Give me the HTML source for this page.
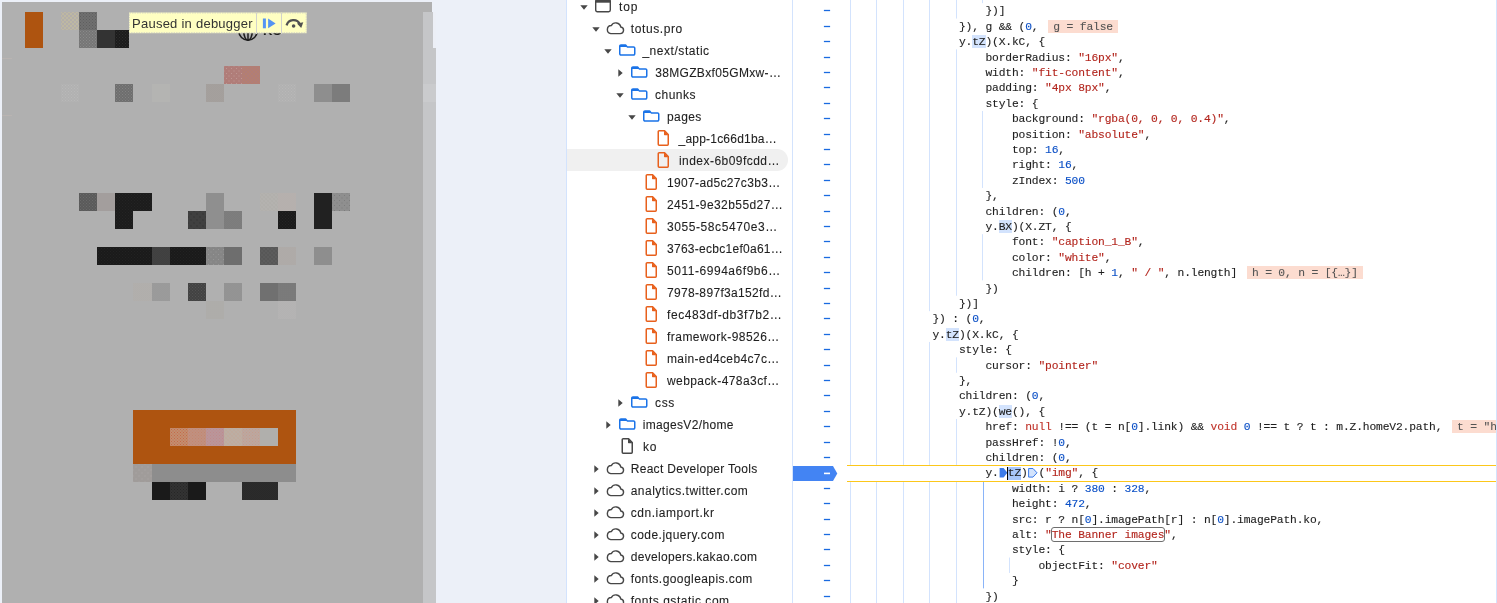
<!DOCTYPE html><html><head><meta charset="utf-8"><title>Paused in debugger</title><style>

*{box-sizing:border-box;margin:0;padding:0}
html,body{width:1497px;height:603px;overflow:hidden;background:#ecf0f8}
body{position:relative;font-family:"Liberation Sans",sans-serif;color:#1f1f1f}
.a{position:absolute}
#page{left:2px;top:2px;width:430px;height:601px;background:#b0b0b0}
.b{position:absolute}
#tip{left:129px;top:12.5px;height:20.8px;width:177.7px;font-size:13px;line-height:21px;color:#333;white-space:nowrap}
#nav{will-change:transform;left:566px;top:0;width:227px;height:603px;background:#fff;border-left:1px solid #d3e3fd;border-right:1px solid #d3e3fd;overflow:hidden}
.row{position:absolute;left:0;width:226px;height:22px}
.t{-webkit-text-stroke:0.1px;position:absolute;top:1px;height:22px;line-height:22px;font-size:12px;white-space:nowrap;color:#1f1f1f}
.sel{position:absolute;left:0;top:0;width:221px;height:22px;background:#f0f0f0;border-radius:0 11px 11px 0}
#ed{will-change:transform;left:793px;top:0;width:704px;height:603px;background:#fff;overflow:hidden}
.g{position:absolute;width:1px;background:#d3e3fd}
.ln{-webkit-text-stroke:0.12px;position:absolute;left:0;height:15.4px;line-height:15.4px;white-space:pre;font-family:"Liberation Mono",monospace;font-size:11.3px;letter-spacing:-0.16px;color:#1f1f1f}
.s{color:#b3261e}.n{color:#0a4fc6}.k{color:#c0342b}
.hl{background:#d3e3fd;padding-top:1px}
.w{position:absolute;height:12.5px;line-height:14.5px;background:#fcdcd0;color:#555;-webkit-text-stroke:0.1px;white-space:pre;font-family:"Liberation Mono",monospace;font-size:11.3px;letter-spacing:-0.16px;padding:0 5px;overflow:hidden}
.d{position:absolute;left:31px;width:6px;height:1.4px;background:#1a73e8}

</style></head><body>
<div id="page" class="a"></div>
<div class="a" style="left:423px;top:12px;width:13px;height:591px;background:#c5c6c8"></div>
<div class="a" style="left:433px;top:12px;width:3px;height:36px;background:#eceff6"></div>
<div class="a" style="left:423px;top:84px;width:13px;height:18px;background:#cacbcd"></div>
<div class="a" style="left:2px;top:58px;width:10px;height:1px;background:#b9b4b2"></div>
<div class="a" style="left:2px;top:115px;width:10px;height:1px;background:#b9b4b2"></div>
<div class="b" style="left:25px;top:12px;width:18px;height:36px;background:#ae5410"></div>
<div class="b" style="left:61px;top:12px;width:18px;height:18px;background:radial-gradient(circle at 50% 50%,#dcd38c 0.45px,transparent 0.8px) 0 0/4px 4px,radial-gradient(circle at 50% 50%,#dcd38c 0.45px,transparent 0.8px) 2px 2px/4px 4px,#b3aeaa"></div>
<div class="b" style="left:79px;top:12px;width:18px;height:18px;background:radial-gradient(circle at 50% 50%,#5e5e5e 0.45px,transparent 0.8px) 0 0/3px 3px,radial-gradient(circle at 50% 50%,#5e5e5e 0.45px,transparent 0.8px) 1.5px 1.5px/3px 3px,#707070"></div>
<div class="b" style="left:79px;top:30px;width:18px;height:18px;background:radial-gradient(circle at 50% 50%,#8a8a8a 0.45px,transparent 0.8px) 0 0/3px 3px,radial-gradient(circle at 50% 50%,#8a8a8a 0.45px,transparent 0.8px) 1.5px 1.5px/3px 3px,#767676"></div>
<div class="b" style="left:97px;top:30px;width:18px;height:18px;background:#333333"></div>
<div class="b" style="left:115px;top:30px;width:14px;height:18px;background:radial-gradient(circle at 50% 50%,#2e2e2e 0.45px,transparent 0.8px) 0 0/3px 3px,radial-gradient(circle at 50% 50%,#2e2e2e 0.45px,transparent 0.8px) 1.5px 1.5px/3px 3px,#1c1c1c"></div>
<div class="b" style="left:224px;top:66px;width:18px;height:18px;background:radial-gradient(circle at 50% 50%,#bf9793 0.45px,transparent 0.8px) 0 0/5px 5px,radial-gradient(circle at 50% 50%,#bf9793 0.45px,transparent 0.8px) 2.5px 2.5px/5px 5px,#b07d79"></div>
<div class="b" style="left:242px;top:66px;width:18px;height:18px;background:radial-gradient(circle at 50% 50%,#c08458 0.45px,transparent 0.8px) 0 0/4px 4px,radial-gradient(circle at 50% 50%,#c08458 0.45px,transparent 0.8px) 2px 2px/4px 4px,#b07d79"></div>
<div class="b" style="left:61px;top:84px;width:18px;height:18px;background:radial-gradient(circle at 50% 50%,#b9b9b9 0.45px,transparent 0.8px) 0 0/3px 3px,radial-gradient(circle at 50% 50%,#b9b9b9 0.45px,transparent 0.8px) 1.5px 1.5px/3px 3px,#b1b1b1"></div>
<div class="b" style="left:115px;top:84px;width:18px;height:18px;background:radial-gradient(circle at 50% 50%,#828282 0.45px,transparent 0.8px) 0 0/3px 3px,radial-gradient(circle at 50% 50%,#828282 0.45px,transparent 0.8px) 1.5px 1.5px/3px 3px,#6e6e6e"></div>
<div class="b" style="left:152px;top:84px;width:18px;height:18px;background:#b4b4b2"></div>
<div class="b" style="left:206px;top:84px;width:18px;height:18px;background:radial-gradient(circle at 50% 50%,#9d9895 0.45px,transparent 0.8px) 0 0/2px 2px,radial-gradient(circle at 50% 50%,#9d9895 0.45px,transparent 0.8px) 1px 1px/2px 2px,#aca7a4"></div>
<div class="b" style="left:278px;top:84px;width:18px;height:18px;background:radial-gradient(circle at 50% 50%,#b9b8b8 0.45px,transparent 0.8px) 0 0/3px 3px,radial-gradient(circle at 50% 50%,#b9b8b8 0.45px,transparent 0.8px) 1.5px 1.5px/3px 3px,#b1b1b1"></div>
<div class="b" style="left:314px;top:84px;width:18px;height:18px;background:#8e8e8e"></div>
<div class="b" style="left:332px;top:84px;width:18px;height:18px;background:#7c7c7c"></div>
<div class="b" style="left:79px;top:193px;width:18px;height:18px;background:radial-gradient(circle at 50% 50%,#6a6a6a 0.45px,transparent 0.8px) 0 0/3px 3px,radial-gradient(circle at 50% 50%,#6a6a6a 0.45px,transparent 0.8px) 1.5px 1.5px/3px 3px,#5a5a5a"></div>
<div class="b" style="left:97px;top:193px;width:18px;height:18px;background:#a39e9d"></div>
<div class="b" style="left:115px;top:193px;width:37px;height:18px;background:radial-gradient(circle at 50% 50%,#242424 0.45px,transparent 0.8px) 0 0/3px 3px,radial-gradient(circle at 50% 50%,#242424 0.45px,transparent 0.8px) 1.5px 1.5px/3px 3px,#1c1c1c"></div>
<div class="b" style="left:206px;top:193px;width:18px;height:36px;background:#8f8f8f"></div>
<div class="b" style="left:260px;top:193px;width:18px;height:18px;background:radial-gradient(circle at 50% 50%,#aaa8a5 0.45px,transparent 0.8px) 0 0/4px 4px,radial-gradient(circle at 50% 50%,#aaa8a5 0.45px,transparent 0.8px) 2px 2px/4px 4px,#b4b2af"></div>
<div class="b" style="left:278px;top:193px;width:18px;height:18px;background:radial-gradient(circle at 50% 50%,#bab5b2 0.45px,transparent 0.8px) 0 0/2px 2px,radial-gradient(circle at 50% 50%,#bab5b2 0.45px,transparent 0.8px) 1px 1px/2px 2px,#b2adaa"></div>
<div class="b" style="left:314px;top:193px;width:18px;height:36px;background:radial-gradient(circle at 50% 50%,#262626 0.45px,transparent 0.8px) 0 0/2px 2px,radial-gradient(circle at 50% 50%,#262626 0.45px,transparent 0.8px) 1px 1px/2px 2px,#1c1c1c"></div>
<div class="b" style="left:332px;top:193px;width:18px;height:18px;background:radial-gradient(circle at 50% 50%,#7c7c7c 0.45px,transparent 0.8px) 0 0/5px 5px,radial-gradient(circle at 50% 50%,#7c7c7c 0.45px,transparent 0.8px) 2.5px 2.5px/5px 5px,#8f8f8f"></div>
<div class="b" style="left:115px;top:211px;width:18px;height:18px;background:radial-gradient(circle at 50% 50%,#242424 0.45px,transparent 0.8px) 0 0/3px 3px,radial-gradient(circle at 50% 50%,#242424 0.45px,transparent 0.8px) 1.5px 1.5px/3px 3px,#1c1c1c"></div>
<div class="b" style="left:188px;top:211px;width:18px;height:18px;background:radial-gradient(circle at 50% 50%,#2c2c2c 0.45px,transparent 0.8px) 0 0/6px 6px,radial-gradient(circle at 50% 50%,#2c2c2c 0.45px,transparent 0.8px) 3px 3px/6px 6px,#404040"></div>
<div class="b" style="left:224px;top:211px;width:18px;height:18px;background:radial-gradient(circle at 50% 50%,#868686 0.45px,transparent 0.8px) 0 0/2px 2px,radial-gradient(circle at 50% 50%,#868686 0.45px,transparent 0.8px) 1px 1px/2px 2px,#767676"></div>
<div class="b" style="left:278px;top:211px;width:18px;height:18px;background:radial-gradient(circle at 50% 50%,#242424 0.45px,transparent 0.8px) 0 0/3px 3px,radial-gradient(circle at 50% 50%,#242424 0.45px,transparent 0.8px) 1.5px 1.5px/3px 3px,#1a1a1a"></div>
<div class="b" style="left:97px;top:247px;width:55px;height:18px;background:radial-gradient(circle at 50% 50%,#222222 0.45px,transparent 0.8px) 0 0/3px 3px,radial-gradient(circle at 50% 50%,#222222 0.45px,transparent 0.8px) 1.5px 1.5px/3px 3px,#1a1a1a"></div>
<div class="b" style="left:152px;top:247px;width:18px;height:18px;background:radial-gradient(circle at 50% 50%,#4a4a4a 0.45px,transparent 0.8px) 0 0/2px 2px,radial-gradient(circle at 50% 50%,#4a4a4a 0.45px,transparent 0.8px) 1px 1px/2px 2px,#3a3a3a"></div>
<div class="b" style="left:170px;top:247px;width:36px;height:18px;background:radial-gradient(circle at 50% 50%,#222222 0.45px,transparent 0.8px) 0 0/3px 3px,radial-gradient(circle at 50% 50%,#222222 0.45px,transparent 0.8px) 1.5px 1.5px/3px 3px,#1a1a1a"></div>
<div class="b" style="left:206px;top:247px;width:18px;height:18px;background:radial-gradient(circle at 50% 50%,#979797 0.45px,transparent 0.8px) 0 0/5px 5px,radial-gradient(circle at 50% 50%,#979797 0.45px,transparent 0.8px) 2.5px 2.5px/5px 5px,#868686"></div>
<div class="b" style="left:224px;top:247px;width:18px;height:18px;background:#6e6e6e"></div>
<div class="b" style="left:260px;top:247px;width:18px;height:18px;background:radial-gradient(circle at 50% 50%,#4c4c4c 0.45px,transparent 0.8px) 0 0/4px 4px,radial-gradient(circle at 50% 50%,#4c4c4c 0.45px,transparent 0.8px) 2px 2px/4px 4px,#5c5c5c"></div>
<div class="b" style="left:278px;top:247px;width:18px;height:18px;background:radial-gradient(circle at 50% 50%,#a9a5a2 0.45px,transparent 0.8px) 0 0/2px 2px,radial-gradient(circle at 50% 50%,#a9a5a2 0.45px,transparent 0.8px) 1px 1px/2px 2px,#b4b0ad"></div>
<div class="b" style="left:314px;top:247px;width:18px;height:18px;background:#8e8e8e"></div>
<div class="b" style="left:133px;top:283px;width:19px;height:18px;background:radial-gradient(circle at 50% 50%,#adaba8 0.45px,transparent 0.8px) 0 0/2px 2px,radial-gradient(circle at 50% 50%,#adaba8 0.45px,transparent 0.8px) 1px 1px/2px 2px,#b5b3b0"></div>
<div class="b" style="left:152px;top:283px;width:18px;height:18px;background:radial-gradient(circle at 50% 50%,#a3a3a3 0.45px,transparent 0.8px) 0 0/2px 2px,radial-gradient(circle at 50% 50%,#a3a3a3 0.45px,transparent 0.8px) 1px 1px/2px 2px,#959595"></div>
<div class="b" style="left:188px;top:283px;width:18px;height:18px;background:radial-gradient(circle at 50% 50%,#525252 0.45px,transparent 0.8px) 0 0/3px 3px,radial-gradient(circle at 50% 50%,#525252 0.45px,transparent 0.8px) 1.5px 1.5px/3px 3px,#424242"></div>
<div class="b" style="left:224px;top:283px;width:18px;height:18px;background:radial-gradient(circle at 50% 50%,#9c9c9c 0.45px,transparent 0.8px) 0 0/2px 2px,radial-gradient(circle at 50% 50%,#9c9c9c 0.45px,transparent 0.8px) 1px 1px/2px 2px,#8e8e8e"></div>
<div class="b" style="left:260px;top:283px;width:18px;height:18px;background:#707070"></div>
<div class="b" style="left:278px;top:283px;width:18px;height:18px;background:radial-gradient(circle at 50% 50%,#727272 0.45px,transparent 0.8px) 0 0/2px 2px,radial-gradient(circle at 50% 50%,#727272 0.45px,transparent 0.8px) 1px 1px/2px 2px,#828282"></div>
<div class="b" style="left:206px;top:301px;width:18px;height:18px;background:radial-gradient(circle at 50% 50%,#aaa9a6 0.45px,transparent 0.8px) 0 0/2px 2px,radial-gradient(circle at 50% 50%,#aaa9a6 0.45px,transparent 0.8px) 1px 1px/2px 2px,#b2b1ae"></div>
<div class="b" style="left:278px;top:301px;width:18px;height:18px;background:radial-gradient(circle at 50% 50%,#b9b7b7 0.45px,transparent 0.8px) 0 0/2px 2px,radial-gradient(circle at 50% 50%,#b9b7b7 0.45px,transparent 0.8px) 1px 1px/2px 2px,#b1b0b0"></div>
<div class="b" style="left:133px;top:410px;width:163px;height:54px;background:#ae5410"></div>
<div class="b" style="left:170px;top:428px;width:18px;height:18px;background:radial-gradient(circle at 50% 50%,#c66a48 0.45px,transparent 0.8px) 0 0/3px 3px,radial-gradient(circle at 50% 50%,#c66a48 0.45px,transparent 0.8px) 1.5px 1.5px/3px 3px,#c28e70"></div>
<div class="b" style="left:188px;top:428px;width:18px;height:18px;background:radial-gradient(circle at 50% 50%,#c4866e 0.45px,transparent 0.8px) 0 0/3px 3px,radial-gradient(circle at 50% 50%,#c4866e 0.45px,transparent 0.8px) 1.5px 1.5px/3px 3px,#c09080"></div>
<div class="b" style="left:206px;top:428px;width:18px;height:18px;background:radial-gradient(circle at 50% 50%,#c08a8c 0.45px,transparent 0.8px) 0 0/3px 3px,radial-gradient(circle at 50% 50%,#c08a8c 0.45px,transparent 0.8px) 1.5px 1.5px/3px 3px,#b9969a"></div>
<div class="b" style="left:224px;top:428px;width:18px;height:18px;background:radial-gradient(circle at 50% 50%,#c8a18d 0.45px,transparent 0.8px) 0 0/4px 4px,radial-gradient(circle at 50% 50%,#c8a18d 0.45px,transparent 0.8px) 2px 2px/4px 4px,#bcaea3"></div>
<div class="b" style="left:242px;top:428px;width:18px;height:18px;background:radial-gradient(circle at 50% 50%,#c59d8d 0.45px,transparent 0.8px) 0 0/3px 3px,radial-gradient(circle at 50% 50%,#c59d8d 0.45px,transparent 0.8px) 1.5px 1.5px/3px 3px,#bba7a0"></div>
<div class="b" style="left:260px;top:428px;width:18px;height:18px;background:#b0afac"></div>
<div class="b" style="left:133px;top:464px;width:19px;height:18px;background:radial-gradient(circle at 50% 50%,#aeaaa8 0.45px,transparent 0.8px) 0 0/6px 6px,radial-gradient(circle at 50% 50%,#aeaaa8 0.45px,transparent 0.8px) 3px 3px/6px 6px,#a09c9a"></div>
<div class="b" style="left:152px;top:464px;width:144px;height:18px;background:#8d8d8d"></div>
<div class="b" style="left:152px;top:482px;width:18px;height:18px;background:#1a1a1a"></div>
<div class="b" style="left:170px;top:482px;width:18px;height:18px;background:radial-gradient(circle at 50% 50%,#262626 0.45px,transparent 0.8px) 0 0/3px 3px,radial-gradient(circle at 50% 50%,#262626 0.45px,transparent 0.8px) 1.5px 1.5px/3px 3px,#333333"></div>
<div class="b" style="left:188px;top:482px;width:18px;height:18px;background:#1a1a1a"></div>
<div class="b" style="left:242px;top:482px;width:36px;height:18px;background:radial-gradient(circle at 50% 50%,#242424 0.45px,transparent 0.8px) 0 0/2px 2px,radial-gradient(circle at 50% 50%,#242424 0.45px,transparent 0.8px) 1px 1px/2px 2px,#303030"></div>
<svg class="a" style="left:237px;top:19.5px" width="22" height="22" viewBox="0 0 22 22"><g fill="none" stroke="#1e1e1e" stroke-width="1.5"><circle cx="11" cy="11" r="9.2"/><ellipse cx="11" cy="11" rx="4.3" ry="9.2"/><path d="M1.8 11h18.4M11 1.8v18.4"/></g></svg>
<div class="a" style="will-change:transform;left:263.3px;top:22.6px;font-weight:bold;font-size:13px;line-height:16px;letter-spacing:-0.3px;color:#1a1a1a">KO</div>
<svg class="a" style="left:128px;top:11px" width="181" height="24" viewBox="0 0 181 24"><rect x="1" y="1.5" width="177.7" height="20.7" fill="#ffffc2"/><rect x="1.5" y="2" width="176.7" height="19.7" fill="none" stroke="#b4b4cc" stroke-opacity="0.5" stroke-width="1" stroke-dasharray="1.5 1"/></svg>
<div id="tip" class="a"><span class="a" style="will-change:transform;left:3px;top:0.5px;letter-spacing:0.25px">Paused in debugger</span><span class="a" style="left:127px;top:0;width:1px;height:21px;background:#d2d2cc"></span><span class="a" style="left:152px;top:0;width:1px;height:21px;background:#d2d2cc"></span><svg class="a" style="left:133px;top:4px" width="14" height="13" viewBox="0 0 14 13"><rect x="0.9" y="1.5" width="3" height="9.8" fill="#5594f2"/><path d="M6.1 1.5L13.6 6.4L6.1 11.3Z" fill="#5594f2"/></svg><svg class="a" style="left:156px;top:3px" width="20" height="15" viewBox="0 0 20 15"><path d="M1.6 9.4A7.1 7.1 0 0 1 14.9 8.2" fill="none" stroke="#505050" stroke-width="2.3"/><path d="M12 7.6L18.3 6.3L16.2 12Z" fill="#505050"/><circle cx="8.6" cy="10" r="1.8" fill="#505050"/></svg></div>
<div id="nav" class="a">
<div class="row" style="top:-5px">
<svg class="a" style="left:13.0px;top:9.5px" width="8" height="5" viewBox="0 0 8 5"><path d="M0.3 0.3h7.4L4 4.7Z" fill="#474747"/></svg>
<svg class="a" style="left:28.0px;top:3.5px" width="16" height="14" viewBox="0 0 16 14"><rect x="0.7" y="0.7" width="14.6" height="12" rx="1.6" fill="none" stroke="#474747" stroke-width="1.4"/><rect x="0.7" y="0.7" width="14.6" height="3" fill="#474747"/></svg>
<span class="t" style="left:51.9px;letter-spacing:0.911px">top</span>
</div>
<div class="row" style="top:17px">
<svg class="a" style="left:25.2px;top:9.5px" width="8" height="5" viewBox="0 0 8 5"><path d="M0.3 0.3h7.4L4 4.7Z" fill="#474747"/></svg>
<svg class="a" style="left:38.6px;top:5px" width="19" height="13" viewBox="0 0 19 13"><path d="M4.8 11.6h9.5a3.3 3.3 0 0 0 0.5-6.55a5.1 5.1 0 0 0-9.5-1.5A4.05 4.05 0 0 0 4.8 11.6Z" fill="none" stroke="#474747" stroke-width="1.4" stroke-linejoin="round"/></svg>
<span class="t" style="left:63.8px;letter-spacing:0.587px">totus.pro</span>
</div>
<div class="row" style="top:39px">
<svg class="a" style="left:37.3px;top:9.5px" width="8" height="5" viewBox="0 0 8 5"><path d="M0.3 0.3h7.4L4 4.7Z" fill="#474747"/></svg>
<svg class="a" style="left:52.0px;top:5px" width="17" height="13" viewBox="0 0 17 13"><path d="M0.75 2.1v7.7a1.2 1.2 0 0 0 1.2 1.2h12.6a1.2 1.2 0 0 0 1.2-1.2V4.1a1.2 1.2 0 0 0-1.2-1.2H8.2L6.6 0.9H1.95a1.2 1.2 0 0 0-1.2 1.2Z" fill="none" stroke="#1a73e8" stroke-width="1.5" stroke-linejoin="round"/><path d="M0.75 2.9V2.1a1.2 1.2 0 0 1 1.2-1.2H6.6L8.2 2.9Z" fill="#1a73e8"/></svg>
<span class="t" style="left:75.4px;letter-spacing:0.546px">_next/static</span>
</div>
<div class="row" style="top:61px">
<svg class="a" style="left:50.7px;top:7.6px" width="5" height="8" viewBox="0 0 5 8"><path d="M0.3 0.3v7.4L4.7 4Z" fill="#474747"/></svg>
<svg class="a" style="left:64.0px;top:5px" width="17" height="13" viewBox="0 0 17 13"><path d="M0.75 2.1v7.7a1.2 1.2 0 0 0 1.2 1.2h12.6a1.2 1.2 0 0 0 1.2-1.2V4.1a1.2 1.2 0 0 0-1.2-1.2H8.2L6.6 0.9H1.95a1.2 1.2 0 0 0-1.2 1.2Z" fill="none" stroke="#1a73e8" stroke-width="1.5" stroke-linejoin="round"/><path d="M0.75 2.9V2.1a1.2 1.2 0 0 1 1.2-1.2H6.6L8.2 2.9Z" fill="#1a73e8"/></svg>
<span class="t" style="left:88.2px;letter-spacing:0.335px">38MGZBxf05GMxw-…</span>
</div>
<div class="row" style="top:83px">
<svg class="a" style="left:49.3px;top:9.5px" width="8" height="5" viewBox="0 0 8 5"><path d="M0.3 0.3h7.4L4 4.7Z" fill="#474747"/></svg>
<svg class="a" style="left:64.0px;top:5px" width="17" height="13" viewBox="0 0 17 13"><path d="M0.75 2.1v7.7a1.2 1.2 0 0 0 1.2 1.2h12.6a1.2 1.2 0 0 0 1.2-1.2V4.1a1.2 1.2 0 0 0-1.2-1.2H8.2L6.6 0.9H1.95a1.2 1.2 0 0 0-1.2 1.2Z" fill="none" stroke="#1a73e8" stroke-width="1.5" stroke-linejoin="round"/><path d="M0.75 2.9V2.1a1.2 1.2 0 0 1 1.2-1.2H6.6L8.2 2.9Z" fill="#1a73e8"/></svg>
<span class="t" style="left:88.0px;letter-spacing:0.494px">chunks</span>
</div>
<div class="row" style="top:105px">
<svg class="a" style="left:61.3px;top:9.5px" width="8" height="5" viewBox="0 0 8 5"><path d="M0.3 0.3h7.4L4 4.7Z" fill="#474747"/></svg>
<svg class="a" style="left:76.0px;top:5px" width="17" height="13" viewBox="0 0 17 13"><path d="M0.75 2.1v7.7a1.2 1.2 0 0 0 1.2 1.2h12.6a1.2 1.2 0 0 0 1.2-1.2V4.1a1.2 1.2 0 0 0-1.2-1.2H8.2L6.6 0.9H1.95a1.2 1.2 0 0 0-1.2 1.2Z" fill="none" stroke="#1a73e8" stroke-width="1.5" stroke-linejoin="round"/><path d="M0.75 2.9V2.1a1.2 1.2 0 0 1 1.2-1.2H6.6L8.2 2.9Z" fill="#1a73e8"/></svg>
<span class="t" style="left:100.0px;letter-spacing:0.399px">pages</span>
</div>
<div class="row" style="top:127px">
<svg class="a" style="left:89.8px;top:2px" width="13" height="17" viewBox="0 0 13 17"><path d="M1.25 2.7a0.9 0.9 0 0 1 0.9-0.9H7.6l3.65 3.65V15.3a0.9 0.9 0 0 1-0.9 0.9H2.15a0.9 0.9 0 0 1-0.9-0.9Z" fill="none" stroke="#e8601c" stroke-width="1.5" stroke-linejoin="round"/><path d="M7 1.6L11.6 6.2H7.6a0.6 0.6 0 0 1-0.6-0.6Z" fill="#e8601c"/></svg>
<span class="t" style="left:111.5px;letter-spacing:0.214px">_app-1c66d1ba…</span>
</div>
<div class="row" style="top:149px">
<div class="sel"></div>
<svg class="a" style="left:89.8px;top:2px" width="13" height="17" viewBox="0 0 13 17"><path d="M1.25 2.7a0.9 0.9 0 0 1 0.9-0.9H7.6l3.65 3.65V15.3a0.9 0.9 0 0 1-0.9 0.9H2.15a0.9 0.9 0 0 1-0.9-0.9Z" fill="none" stroke="#e8601c" stroke-width="1.5" stroke-linejoin="round"/><path d="M7 1.6L11.6 6.2H7.6a0.6 0.6 0 0 1-0.6-0.6Z" fill="#e8601c"/></svg>
<span class="t" style="left:111.9px;letter-spacing:0.468px">index-6b09fcdd…</span>
</div>
<div class="row" style="top:171px">
<svg class="a" style="left:77.8px;top:2px" width="13" height="17" viewBox="0 0 13 17"><path d="M1.25 2.7a0.9 0.9 0 0 1 0.9-0.9H7.6l3.65 3.65V15.3a0.9 0.9 0 0 1-0.9 0.9H2.15a0.9 0.9 0 0 1-0.9-0.9Z" fill="none" stroke="#e8601c" stroke-width="1.5" stroke-linejoin="round"/><path d="M7 1.6L11.6 6.2H7.6a0.6 0.6 0 0 1-0.6-0.6Z" fill="#e8601c"/></svg>
<span class="t" style="left:100.0px;letter-spacing:0.340px">1907-ad5c27c3b3…</span>
</div>
<div class="row" style="top:193px">
<svg class="a" style="left:77.8px;top:2px" width="13" height="17" viewBox="0 0 13 17"><path d="M1.25 2.7a0.9 0.9 0 0 1 0.9-0.9H7.6l3.65 3.65V15.3a0.9 0.9 0 0 1-0.9 0.9H2.15a0.9 0.9 0 0 1-0.9-0.9Z" fill="none" stroke="#e8601c" stroke-width="1.5" stroke-linejoin="round"/><path d="M7 1.6L11.6 6.2H7.6a0.6 0.6 0 0 1-0.6-0.6Z" fill="#e8601c"/></svg>
<span class="t" style="left:100.0px;letter-spacing:0.424px">2451-9e32b55d27…</span>
</div>
<div class="row" style="top:215px">
<svg class="a" style="left:77.8px;top:2px" width="13" height="17" viewBox="0 0 13 17"><path d="M1.25 2.7a0.9 0.9 0 0 1 0.9-0.9H7.6l3.65 3.65V15.3a0.9 0.9 0 0 1-0.9 0.9H2.15a0.9 0.9 0 0 1-0.9-0.9Z" fill="none" stroke="#e8601c" stroke-width="1.5" stroke-linejoin="round"/><path d="M7 1.6L11.6 6.2H7.6a0.6 0.6 0 0 1-0.6-0.6Z" fill="#e8601c"/></svg>
<span class="t" style="left:100.0px;letter-spacing:0.579px">3055-58c5470e3…</span>
</div>
<div class="row" style="top:237px">
<svg class="a" style="left:77.8px;top:2px" width="13" height="17" viewBox="0 0 13 17"><path d="M1.25 2.7a0.9 0.9 0 0 1 0.9-0.9H7.6l3.65 3.65V15.3a0.9 0.9 0 0 1-0.9 0.9H2.15a0.9 0.9 0 0 1-0.9-0.9Z" fill="none" stroke="#e8601c" stroke-width="1.5" stroke-linejoin="round"/><path d="M7 1.6L11.6 6.2H7.6a0.6 0.6 0 0 1-0.6-0.6Z" fill="#e8601c"/></svg>
<span class="t" style="left:100.0px;letter-spacing:0.274px">3763-ecbc1ef0a61…</span>
</div>
<div class="row" style="top:259px">
<svg class="a" style="left:77.8px;top:2px" width="13" height="17" viewBox="0 0 13 17"><path d="M1.25 2.7a0.9 0.9 0 0 1 0.9-0.9H7.6l3.65 3.65V15.3a0.9 0.9 0 0 1-0.9 0.9H2.15a0.9 0.9 0 0 1-0.9-0.9Z" fill="none" stroke="#e8601c" stroke-width="1.5" stroke-linejoin="round"/><path d="M7 1.6L11.6 6.2H7.6a0.6 0.6 0 0 1-0.6-0.6Z" fill="#e8601c"/></svg>
<span class="t" style="left:100.0px;letter-spacing:0.540px">5011-6994a6f9b6…</span>
</div>
<div class="row" style="top:281px">
<svg class="a" style="left:77.8px;top:2px" width="13" height="17" viewBox="0 0 13 17"><path d="M1.25 2.7a0.9 0.9 0 0 1 0.9-0.9H7.6l3.65 3.65V15.3a0.9 0.9 0 0 1-0.9 0.9H2.15a0.9 0.9 0 0 1-0.9-0.9Z" fill="none" stroke="#e8601c" stroke-width="1.5" stroke-linejoin="round"/><path d="M7 1.6L11.6 6.2H7.6a0.6 0.6 0 0 1-0.6-0.6Z" fill="#e8601c"/></svg>
<span class="t" style="left:100.0px;letter-spacing:0.335px">7978-897f3a152fd…</span>
</div>
<div class="row" style="top:303px">
<svg class="a" style="left:77.8px;top:2px" width="13" height="17" viewBox="0 0 13 17"><path d="M1.25 2.7a0.9 0.9 0 0 1 0.9-0.9H7.6l3.65 3.65V15.3a0.9 0.9 0 0 1-0.9 0.9H2.15a0.9 0.9 0 0 1-0.9-0.9Z" fill="none" stroke="#e8601c" stroke-width="1.5" stroke-linejoin="round"/><path d="M7 1.6L11.6 6.2H7.6a0.6 0.6 0 0 1-0.6-0.6Z" fill="#e8601c"/></svg>
<span class="t" style="left:100.0px;letter-spacing:0.586px">fec483df-db3f7b2…</span>
</div>
<div class="row" style="top:325px">
<svg class="a" style="left:77.8px;top:2px" width="13" height="17" viewBox="0 0 13 17"><path d="M1.25 2.7a0.9 0.9 0 0 1 0.9-0.9H7.6l3.65 3.65V15.3a0.9 0.9 0 0 1-0.9 0.9H2.15a0.9 0.9 0 0 1-0.9-0.9Z" fill="none" stroke="#e8601c" stroke-width="1.5" stroke-linejoin="round"/><path d="M7 1.6L11.6 6.2H7.6a0.6 0.6 0 0 1-0.6-0.6Z" fill="#e8601c"/></svg>
<span class="t" style="left:100.0px;letter-spacing:0.462px">framework-98526…</span>
</div>
<div class="row" style="top:347px">
<svg class="a" style="left:77.8px;top:2px" width="13" height="17" viewBox="0 0 13 17"><path d="M1.25 2.7a0.9 0.9 0 0 1 0.9-0.9H7.6l3.65 3.65V15.3a0.9 0.9 0 0 1-0.9 0.9H2.15a0.9 0.9 0 0 1-0.9-0.9Z" fill="none" stroke="#e8601c" stroke-width="1.5" stroke-linejoin="round"/><path d="M7 1.6L11.6 6.2H7.6a0.6 0.6 0 0 1-0.6-0.6Z" fill="#e8601c"/></svg>
<span class="t" style="left:100.0px;letter-spacing:0.371px">main-ed4ceb4c7c…</span>
</div>
<div class="row" style="top:369px">
<svg class="a" style="left:77.8px;top:2px" width="13" height="17" viewBox="0 0 13 17"><path d="M1.25 2.7a0.9 0.9 0 0 1 0.9-0.9H7.6l3.65 3.65V15.3a0.9 0.9 0 0 1-0.9 0.9H2.15a0.9 0.9 0 0 1-0.9-0.9Z" fill="none" stroke="#e8601c" stroke-width="1.5" stroke-linejoin="round"/><path d="M7 1.6L11.6 6.2H7.6a0.6 0.6 0 0 1-0.6-0.6Z" fill="#e8601c"/></svg>
<span class="t" style="left:100.0px;letter-spacing:0.416px">webpack-478a3cf…</span>
</div>
<div class="row" style="top:391px">
<svg class="a" style="left:50.7px;top:7.6px" width="5" height="8" viewBox="0 0 5 8"><path d="M0.3 0.3v7.4L4.7 4Z" fill="#474747"/></svg>
<svg class="a" style="left:64.0px;top:5px" width="17" height="13" viewBox="0 0 17 13"><path d="M0.75 2.1v7.7a1.2 1.2 0 0 0 1.2 1.2h12.6a1.2 1.2 0 0 0 1.2-1.2V4.1a1.2 1.2 0 0 0-1.2-1.2H8.2L6.6 0.9H1.95a1.2 1.2 0 0 0-1.2 1.2Z" fill="none" stroke="#1a73e8" stroke-width="1.5" stroke-linejoin="round"/><path d="M0.75 2.9V2.1a1.2 1.2 0 0 1 1.2-1.2H6.6L8.2 2.9Z" fill="#1a73e8"/></svg>
<span class="t" style="left:88.0px;letter-spacing:0.650px">css</span>
</div>
<div class="row" style="top:413px">
<svg class="a" style="left:38.7px;top:7.6px" width="5" height="8" viewBox="0 0 5 8"><path d="M0.3 0.3v7.4L4.7 4Z" fill="#474747"/></svg>
<svg class="a" style="left:52.0px;top:5px" width="17" height="13" viewBox="0 0 17 13"><path d="M0.75 2.1v7.7a1.2 1.2 0 0 0 1.2 1.2h12.6a1.2 1.2 0 0 0 1.2-1.2V4.1a1.2 1.2 0 0 0-1.2-1.2H8.2L6.6 0.9H1.95a1.2 1.2 0 0 0-1.2 1.2Z" fill="none" stroke="#1a73e8" stroke-width="1.5" stroke-linejoin="round"/><path d="M0.75 2.9V2.1a1.2 1.2 0 0 1 1.2-1.2H6.6L8.2 2.9Z" fill="#1a73e8"/></svg>
<span class="t" style="left:75.7px;letter-spacing:0.333px">imagesV2/home</span>
</div>
<div class="row" style="top:435px">
<svg class="a" style="left:53.6px;top:2px" width="13" height="17" viewBox="0 0 13 17"><path d="M1.25 2.7a0.9 0.9 0 0 1 0.9-0.9H7.6l3.65 3.65V15.3a0.9 0.9 0 0 1-0.9 0.9H2.15a0.9 0.9 0 0 1-0.9-0.9Z" fill="none" stroke="#474747" stroke-width="1.5" stroke-linejoin="round"/><path d="M7 1.6L11.6 6.2H7.6a0.6 0.6 0 0 1-0.6-0.6Z" fill="#474747"/></svg>
<span class="t" style="left:76.1px;letter-spacing:0.619px">ko</span>
</div>
<div class="row" style="top:457px">
<svg class="a" style="left:26.7px;top:7.6px" width="5" height="8" viewBox="0 0 5 8"><path d="M0.3 0.3v7.4L4.7 4Z" fill="#474747"/></svg>
<svg class="a" style="left:38.6px;top:5px" width="19" height="13" viewBox="0 0 19 13"><path d="M4.8 11.6h9.5a3.3 3.3 0 0 0 0.5-6.55a5.1 5.1 0 0 0-9.5-1.5A4.05 4.05 0 0 0 4.8 11.6Z" fill="none" stroke="#474747" stroke-width="1.4" stroke-linejoin="round"/></svg>
<span class="t" style="left:63.7px;letter-spacing:0.305px">React Developer Tools</span>
</div>
<div class="row" style="top:479px">
<svg class="a" style="left:26.7px;top:7.6px" width="5" height="8" viewBox="0 0 5 8"><path d="M0.3 0.3v7.4L4.7 4Z" fill="#474747"/></svg>
<svg class="a" style="left:38.6px;top:5px" width="19" height="13" viewBox="0 0 19 13"><path d="M4.8 11.6h9.5a3.3 3.3 0 0 0 0.5-6.55a5.1 5.1 0 0 0-9.5-1.5A4.05 4.05 0 0 0 4.8 11.6Z" fill="none" stroke="#474747" stroke-width="1.4" stroke-linejoin="round"/></svg>
<span class="t" style="left:63.7px;letter-spacing:0.487px">analytics.twitter.com</span>
</div>
<div class="row" style="top:501px">
<svg class="a" style="left:26.7px;top:7.6px" width="5" height="8" viewBox="0 0 5 8"><path d="M0.3 0.3v7.4L4.7 4Z" fill="#474747"/></svg>
<svg class="a" style="left:38.6px;top:5px" width="19" height="13" viewBox="0 0 19 13"><path d="M4.8 11.6h9.5a3.3 3.3 0 0 0 0.5-6.55a5.1 5.1 0 0 0-9.5-1.5A4.05 4.05 0 0 0 4.8 11.6Z" fill="none" stroke="#474747" stroke-width="1.4" stroke-linejoin="round"/></svg>
<span class="t" style="left:63.7px;letter-spacing:0.552px">cdn.iamport.kr</span>
</div>
<div class="row" style="top:523px">
<svg class="a" style="left:26.7px;top:7.6px" width="5" height="8" viewBox="0 0 5 8"><path d="M0.3 0.3v7.4L4.7 4Z" fill="#474747"/></svg>
<svg class="a" style="left:38.6px;top:5px" width="19" height="13" viewBox="0 0 19 13"><path d="M4.8 11.6h9.5a3.3 3.3 0 0 0 0.5-6.55a5.1 5.1 0 0 0-9.5-1.5A4.05 4.05 0 0 0 4.8 11.6Z" fill="none" stroke="#474747" stroke-width="1.4" stroke-linejoin="round"/></svg>
<span class="t" style="left:63.7px;letter-spacing:0.475px">code.jquery.com</span>
</div>
<div class="row" style="top:545px">
<svg class="a" style="left:26.7px;top:7.6px" width="5" height="8" viewBox="0 0 5 8"><path d="M0.3 0.3v7.4L4.7 4Z" fill="#474747"/></svg>
<svg class="a" style="left:38.6px;top:5px" width="19" height="13" viewBox="0 0 19 13"><path d="M4.8 11.6h9.5a3.3 3.3 0 0 0 0.5-6.55a5.1 5.1 0 0 0-9.5-1.5A4.05 4.05 0 0 0 4.8 11.6Z" fill="none" stroke="#474747" stroke-width="1.4" stroke-linejoin="round"/></svg>
<span class="t" style="left:63.7px;letter-spacing:0.323px">developers.kakao.com</span>
</div>
<div class="row" style="top:567px">
<svg class="a" style="left:26.7px;top:7.6px" width="5" height="8" viewBox="0 0 5 8"><path d="M0.3 0.3v7.4L4.7 4Z" fill="#474747"/></svg>
<svg class="a" style="left:38.6px;top:5px" width="19" height="13" viewBox="0 0 19 13"><path d="M4.8 11.6h9.5a3.3 3.3 0 0 0 0.5-6.55a5.1 5.1 0 0 0-9.5-1.5A4.05 4.05 0 0 0 4.8 11.6Z" fill="none" stroke="#474747" stroke-width="1.4" stroke-linejoin="round"/></svg>
<span class="t" style="left:63.7px;letter-spacing:0.432px">fonts.googleapis.com</span>
</div>
<div class="row" style="top:589px">
<svg class="a" style="left:26.7px;top:7.6px" width="5" height="8" viewBox="0 0 5 8"><path d="M0.3 0.3v7.4L4.7 4Z" fill="#474747"/></svg>
<svg class="a" style="left:38.6px;top:5px" width="19" height="13" viewBox="0 0 19 13"><path d="M4.8 11.6h9.5a3.3 3.3 0 0 0 0.5-6.55a5.1 5.1 0 0 0-9.5-1.5A4.05 4.05 0 0 0 4.8 11.6Z" fill="none" stroke="#474747" stroke-width="1.4" stroke-linejoin="round"/></svg>
<span class="t" style="left:63.7px;letter-spacing:0.523px">fonts.gstatic.com</span>
</div>
</div>
<div id="ed" class="a">
<svg class="a" style="left:0;top:0" width="704" height="603" viewBox="0 0 704 603" shape-rendering="auto">
<rect x="57.00" y="0" width="1" height="603" fill="#d3e3fd"/>
<rect x="83.00" y="-12.25" width="1" height="477.40" fill="#d3e3fd"/>
<rect x="83.00" y="480.55" width="1" height="138.60" fill="#d3e3fd"/>
<rect x="110.00" y="-12.25" width="1" height="477.40" fill="#d3e3fd"/>
<rect x="110.00" y="480.55" width="1" height="138.60" fill="#d3e3fd"/>
<rect x="136.00" y="-12.25" width="1" height="323.40" fill="#d3e3fd"/>
<rect x="136.00" y="341.95" width="1" height="123.20" fill="#d3e3fd"/>
<rect x="136.00" y="480.55" width="1" height="138.60" fill="#d3e3fd"/>
<rect x="163.00" y="-12.25" width="1" height="30.80" fill="#d3e3fd"/>
<rect x="163.00" y="49.35" width="1" height="246.40" fill="#d3e3fd"/>
<rect x="163.00" y="357.35" width="1" height="15.40" fill="#d3e3fd"/>
<rect x="163.00" y="418.95" width="1" height="46.20" fill="#d3e3fd"/>
<rect x="163.00" y="480.55" width="1" height="123.20" fill="#d3e3fd"/>
<rect x="189.00" y="-12.25" width="1" height="15.40" fill="#d3e3fd"/>
<rect x="189.00" y="110.95" width="1" height="77.00" fill="#d3e3fd"/>
<rect x="189.00" y="234.15" width="1" height="46.20" fill="#d3e3fd"/>
<rect x="190.00" y="480.55" width="1" height="107.80" fill="#8ab4f8"/>
<rect x="216.00" y="557.55" width="1" height="15.40" fill="#d3e3fd"/>
<rect x="30.9" y="9.85" width="6.2" height="1.3" fill="#1a6ae0"/>
<rect x="30.9" y="25.85" width="6.2" height="1.3" fill="#1a6ae0"/>
<rect x="30.9" y="40.85" width="6.2" height="1.3" fill="#1a6ae0"/>
<rect x="30.9" y="56.85" width="6.2" height="1.3" fill="#1a6ae0"/>
<rect x="30.9" y="71.85" width="6.2" height="1.3" fill="#1a6ae0"/>
<rect x="30.9" y="86.85" width="6.2" height="1.3" fill="#1a6ae0"/>
<rect x="30.9" y="102.85" width="6.2" height="1.3" fill="#1a6ae0"/>
<rect x="30.9" y="117.85" width="6.2" height="1.3" fill="#1a6ae0"/>
<rect x="30.9" y="133.85" width="6.2" height="1.3" fill="#1a6ae0"/>
<rect x="30.9" y="148.85" width="6.2" height="1.3" fill="#1a6ae0"/>
<rect x="30.9" y="163.85" width="6.2" height="1.3" fill="#1a6ae0"/>
<rect x="30.9" y="179.85" width="6.2" height="1.3" fill="#1a6ae0"/>
<rect x="30.9" y="194.85" width="6.2" height="1.3" fill="#1a6ae0"/>
<rect x="30.9" y="210.85" width="6.2" height="1.3" fill="#1a6ae0"/>
<rect x="30.9" y="225.85" width="6.2" height="1.3" fill="#1a6ae0"/>
<rect x="30.9" y="240.85" width="6.2" height="1.3" fill="#1a6ae0"/>
<rect x="30.9" y="256.85" width="6.2" height="1.3" fill="#1a6ae0"/>
<rect x="30.9" y="271.85" width="6.2" height="1.3" fill="#1a6ae0"/>
<rect x="30.9" y="287.85" width="6.2" height="1.3" fill="#1a6ae0"/>
<rect x="30.9" y="302.85" width="6.2" height="1.3" fill="#1a6ae0"/>
<rect x="30.9" y="317.85" width="6.2" height="1.3" fill="#1a6ae0"/>
<rect x="30.9" y="333.85" width="6.2" height="1.3" fill="#1a6ae0"/>
<rect x="30.9" y="348.85" width="6.2" height="1.3" fill="#1a6ae0"/>
<rect x="30.9" y="364.85" width="6.2" height="1.3" fill="#1a6ae0"/>
<rect x="30.9" y="379.85" width="6.2" height="1.3" fill="#1a6ae0"/>
<rect x="30.9" y="394.85" width="6.2" height="1.3" fill="#1a6ae0"/>
<rect x="30.9" y="410.85" width="6.2" height="1.3" fill="#1a6ae0"/>
<rect x="30.9" y="425.85" width="6.2" height="1.3" fill="#1a6ae0"/>
<rect x="30.9" y="441.85" width="6.2" height="1.3" fill="#1a6ae0"/>
<rect x="30.9" y="456.85" width="6.2" height="1.3" fill="#1a6ae0"/>
<rect x="30.9" y="487.85" width="6.2" height="1.3" fill="#1a6ae0"/>
<rect x="30.9" y="502.85" width="6.2" height="1.3" fill="#1a6ae0"/>
<rect x="30.9" y="518.85" width="6.2" height="1.3" fill="#1a6ae0"/>
<rect x="30.9" y="533.85" width="6.2" height="1.3" fill="#1a6ae0"/>
<rect x="30.9" y="548.85" width="6.2" height="1.3" fill="#1a6ae0"/>
<rect x="30.9" y="564.85" width="6.2" height="1.3" fill="#1a6ae0"/>
<rect x="30.9" y="579.85" width="6.2" height="1.3" fill="#1a6ae0"/>
<rect x="30.9" y="595.85" width="6.2" height="1.3" fill="#1a6ae0"/>
</svg>
<svg class="a" style="left:0;top:466px" width="45" height="15" viewBox="0 0 45 15"><path d="M0 0H40L44.3 7.5L40 15H0Z" fill="#4384f3"/><rect x="31" y="6.6" width="6" height="1.6" fill="#fff"/></svg>
<div class="a" style="left:54px;top:465px;width:650px;height:17px;background:#fff;border-top:1px solid #fcc71a;border-bottom:1px solid #fcc71a"></div>
<div class="ln" style="left:192.5px;top:4.00px">})]</div>
<div class="ln" style="left:166.0px;top:20.00px">}), g &amp;&amp; (<span class="n">0</span>,</div>
<div class="w" style="left:255.3px;top:20.0px">g = false</div>
<div class="ln" style="left:166.0px;top:35.00px">y.<span class="hl">tZ</span>)(X.kC, {</div>
<div class="ln" style="left:192.5px;top:51.00px">borderRadius: <span class="s">"16px"</span>,</div>
<div class="ln" style="left:192.5px;top:66.00px">width: <span class="s">"fit-content"</span>,</div>
<div class="ln" style="left:192.5px;top:81.00px">padding: <span class="s">"4px 8px"</span>,</div>
<div class="ln" style="left:192.5px;top:97.00px">style: {</div>
<div class="ln" style="left:219.0px;top:112.00px">background: <span class="s">"rgba(0, 0, 0, 0.4)"</span>,</div>
<div class="ln" style="left:219.0px;top:128.00px">position: <span class="s">"absolute"</span>,</div>
<div class="ln" style="left:219.0px;top:143.00px">top: <span class="n">16</span>,</div>
<div class="ln" style="left:219.0px;top:158.00px">right: <span class="n">16</span>,</div>
<div class="ln" style="left:219.0px;top:174.00px">zIndex: <span class="n">500</span></div>
<div class="ln" style="left:192.5px;top:189.00px">},</div>
<div class="ln" style="left:192.5px;top:205.00px">children: (<span class="n">0</span>,</div>
<div class="ln" style="left:192.5px;top:220.00px">y.<span class="hl">BX</span>)(X.ZT, {</div>
<div class="ln" style="left:219.0px;top:235.00px">font: <span class="s">"caption_1_B"</span>,</div>
<div class="ln" style="left:219.0px;top:251.00px">color: <span class="s">"white"</span>,</div>
<div class="ln" style="left:219.0px;top:266.00px">children: [h + <span class="n">1</span>, <span class="s">" / "</span>, n.length]</div>
<div class="w" style="left:453.9px;top:266.0px">h = 0, n = [{…}]</div>
<div class="ln" style="left:192.5px;top:282.00px">})</div>
<div class="ln" style="left:166.0px;top:297.00px">})]</div>
<div class="ln" style="left:139.5px;top:312.00px">}) : (<span class="n">0</span>,</div>
<div class="ln" style="left:139.5px;top:328.00px">y.<span class="hl">tZ</span>)(X.kC, {</div>
<div class="ln" style="left:166.0px;top:343.00px">style: {</div>
<div class="ln" style="left:192.5px;top:359.00px">cursor: <span class="s">"pointer"</span></div>
<div class="ln" style="left:166.0px;top:374.00px">},</div>
<div class="ln" style="left:166.0px;top:389.00px">children: (<span class="n">0</span>,</div>
<div class="ln" style="left:166.0px;top:405.00px">y.tZ)(<span class="hl">we</span>(), {</div>
<div class="ln" style="left:192.5px;top:420.00px">href: <span class="k">null</span> !== (t = n[<span class="n">0</span>].link) &amp;&amp; <span class="k">void</span> <span class="n">0</span> !== t ? t : m.Z.homeV2.path,</div>
<div class="w" style="left:659.1px;top:420.0px">t = "h       </div>
<div class="ln" style="left:192.5px;top:436.00px">passHref: !<span class="n">0</span>,</div>
<div class="ln" style="left:192.5px;top:451.00px">children: (<span class="n">0</span>,</div>
<div class="ln" style="left:192.5px;top:466.00px">y.</div>
<svg class="a" style="left:206.0px;top:468px" width="9" height="10" viewBox="0 0 9 10"><path d="M0.6 0H4.6L8.4 4.8L4.6 9.6H0.6Z" fill="#3b7bea"/></svg>
<div class="a" style="left:214.8px;top:467px;width:13.3px;height:12.8px;background:#a8c7fa"></div>
<div class="a" style="left:214.4px;top:467px;width:1px;height:12.8px;background:#000"></div>
<div class="ln" style="left:214.8px;top:466.00px">tZ)</div>
<svg class="a" style="left:234.8px;top:468px" width="10" height="10" viewBox="0 0 10 10"><path d="M0.6 0.5H5L9 4.8L5 9.1H0.6Z" fill="#d3e3fd" stroke="#3b7bea" stroke-width="1"/></svg>
<div class="ln" style="left:245.5px;top:466.00px">(<span class="s">"img"</span>, {</div>
<div class="ln" style="left:219.0px;top:482.00px">width: i ? <span class="n">380</span> : <span class="n">328</span>,</div>
<div class="ln" style="left:219.0px;top:497.00px">height: <span class="n">472</span>,</div>
<div class="ln" style="left:219.0px;top:513.00px">src: r ? n[<span class="n">0</span>].imagePath[r] : n[<span class="n">0</span>].imagePath.ko,</div>
<div class="ln" style="left:219.0px;top:528.00px">alt: <span class="s">"The Banner images"</span>,</div>
<div class="ln" style="left:219.0px;top:543.00px">style: {</div>
<div class="ln" style="left:245.5px;top:559.00px">objectFit: <span class="s">"cover"</span></div>
<div class="ln" style="left:219.0px;top:574.00px">}</div>
<div class="ln" style="left:192.5px;top:590.00px">})</div>
<div class="a" style="left:257.8px;top:527px;width:114.5px;height:15px;border:1px solid #6e6e6e;border-radius:3px"></div>
<div class="g" style="left:703px;top:0;height:603px"></div>
</div>
</body></html>
